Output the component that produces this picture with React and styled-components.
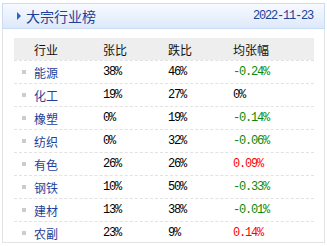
import React from 'react';
import styled, { createGlobalStyle } from 'styled-components';

const rows = [
    { name: '能源', up: '38%', down: '46%', avg: '-0.24%' },
    { name: '化工', up: '19%', down: '27%', avg: '0%' },
    { name: '橡塑', up: '0%', down: '19%', avg: '-0.14%' },
    { name: '纺织', up: '0%', down: '32%', avg: '-0.06%' },
    { name: '有色', up: '26%', down: '26%', avg: '0.09%' },
    { name: '钢铁', up: '10%', down: '50%', avg: '-0.33%' },
    { name: '建材', up: '13%', down: '38%', avg: '-0.01%' },
    { name: '农副', up: '23%', down: '9%', avg: '0.14%' },
];

const trend = (v) => {
    if (v.startsWith('-')) return 'down';
    if (parseFloat(v) > 0) return 'up';
    return 'flat';
};

const App = () => {
    return (
        <>
            <GlobalStyle />
            <Panel>
                <PanelHeader>
                    <Title>
                        <Arrow />
                        大宗行业榜
                    </Title>
                    <DateText>2022-11-23</DateText>
                </PanelHeader>
                <Table>
                    <HeadRow>
                        <HeadCell $first>行业</HeadCell>
                        <HeadCell>张比</HeadCell>
                        <HeadCell>跌比</HeadCell>
                        <HeadCell>均张幅</HeadCell>
                    </HeadRow>
                    {rows.map((r) => (
                        <Row key={r.name}>
                            <NameCell>
                                <Bullet />
                                {r.name}
                            </NameCell>
                            <Num>{r.up}</Num>
                            <Num>{r.down}</Num>
                            <Num $trend={trend(r.avg)}>{r.avg}</Num>
                        </Row>
                    ))}
                </Table>
            </Panel>
        </>
    );
};

export default App;

// Styling
const GlobalStyle = createGlobalStyle`
    body {
        margin: 0;
        background: #fff;
        font-family: "Noto Sans CJK SC", "Liberation Sans", sans-serif;
    }
`;

const Panel = styled.div`
    margin: 3px 0 0 2px;
    width: 323px;
    height: 240px;
    box-sizing: border-box;
    border: 1px solid #e3e3e3;
    border-top: none;
`;

const PanelHeader = styled.div`
    display: flex;
    align-items: center;
    justify-content: space-between;
    height: 26px;
    margin: 0 -1px;
    box-sizing: border-box;
    border: 1px solid #c9dbf5;
    background: linear-gradient(to bottom, #f7faff 0%, #e9f1fc 55%, #dde8f9 100%);
    padding: 0 11px 0 14px;
`;

const Title = styled.div`
    display: flex;
    align-items: center;
    gap: 5px;
    font-size: 14px;
    color: #1f3f99;
    line-height: 1;
`;

const Arrow = styled.span`
    width: 0;
    height: 0;
    border-top: 4px solid transparent;
    border-bottom: 4px solid transparent;
    border-left: 4px solid #2d63c8;
`;

const DateText = styled.div`
    font-family: "Liberation Mono", monospace;
    font-size: 12px;
    letter-spacing: -1.2px;
    color: #21409a;
`;

const Table = styled.div`
    margin: 9px 10px 0 11px;
`;

const HeadRow = styled.div`
    display: grid;
    grid-template-columns: 89px 65px 65px 1fr;
    align-items: center;
    height: 22px;
    background: #eeeeee;
`;

const HeadCell = styled.div`
    font-size: 12px;
    color: #111;
    padding-left: ${({ $first }) => ($first ? '20px' : '0')};
`;

const Row = styled.div`
    display: grid;
    grid-template-columns: 89px 65px 65px 1fr;
    align-items: center;
    height: 23px;
    box-sizing: border-box;
    border-top: 1px dashed #e2e2e2;
`;

const NameCell = styled.div`
    display: flex;
    align-items: center;
    font-size: 12px;
    color: #1f3f99;
    padding-left: 8px;
`;

const Bullet = styled.span`
    width: 4px;
    height: 4px;
    background: #cccccc;
    margin-right: 8px;
`;

const Num = styled.div`
    font-family: "Liberation Mono", monospace;
    font-size: 12px;
    letter-spacing: -1.2px;
    color: ${({ $trend }) =>
        $trend === 'down' ? '#0a8a0a' : $trend === 'up' ? '#ff0000' : '#000'};
`;
